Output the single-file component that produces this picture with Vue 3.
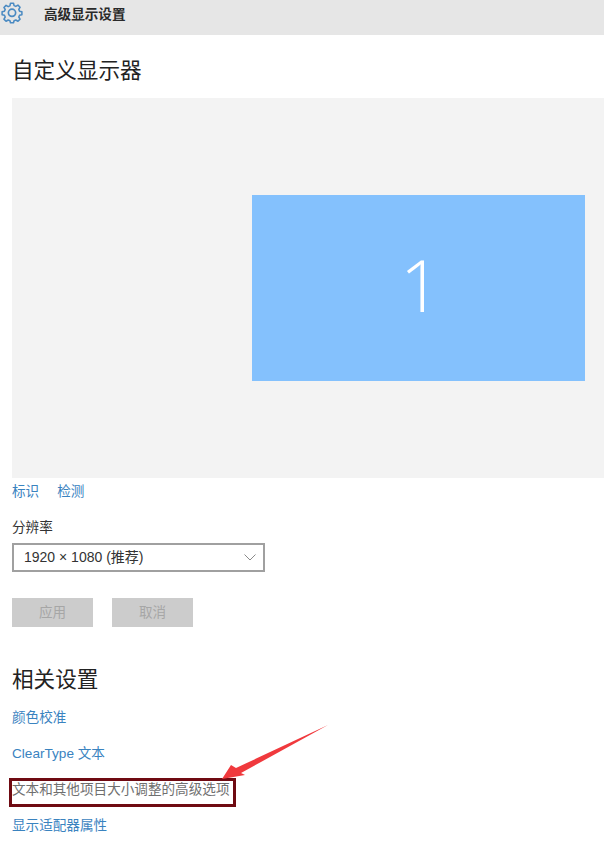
<script setup>
const links = ['颜色校准', 'ClearType 文本']
</script>

<template>
  <div class="page">
    <header class="bar">
      <svg class="gear" width="22" height="22" viewBox="0 0 26 26" fill="none" stroke="#4a8ac2" stroke-width="2" stroke-linejoin="round">
        <path d="M11 2.500h4l.7 3.200 2.300 1 2.800-1.700 2.800 2.800-1.700 2.800 1 2.300 3.100.7v4l-3.100.7-1 2.300 1.700 2.800-2.800 2.800-2.800-1.700-2.300 1-.7 2.700h-4l-.7-2.700-2.300-1-2.800 1.700-2.800-2.800 1.700-2.800-1-2.300-3.100-.7v-4l3.100-.7 1-2.300L2.400 8.100l2.800-2.800L8 7l2.300-1z" transform="translate(1.300 -.8) scale(.9)"/>
        <circle cx="13" cy="12.800" r="4.300"/>
      </svg>
      <span class="bar-title">高级显示设置</span>
    </header>

    <main class="content">
      <h1 class="heading first">自定义显示器</h1>
      <section class="canvas">
        <div class="monitor">1</div>
      </section>
      <nav class="actions">
        <a>标识</a>
        <a>检测</a>
      </nav>
      <label class="label">分辨率</label>
      <div class="select">
        <span class="select-value">1920 × 1080 (推荐)</span>
        <svg width="12" height="7" viewBox="0 0 12 7" fill="none" stroke="#8a8a8a" stroke-width="1">
          <path d="M.5.500 6 6l5.500-5.500"/>
        </svg>
      </div>
      <div class="buttons">
        <button>应用</button>
        <button>取消</button>
      </div>
      <h1 class="heading second">相关设置</h1>
      <ul class="links">
        <li v-for="l in links" :key="l">{{ l }}</li>
        <li class="marked">
          <span>文本和其他项目大小调整的高级选项</span>
          <svg class="arrow" width="112" height="62" viewBox="0 0 112 62">
            <path d="M109 2 17 45 12 42 3 56 26 52 22 50Z" fill="#f0393d"/>
          </svg>
        </li>
        <li>显示适配器属性</li>
      </ul>
    </main>
  </div>
</template>

<style>
html, body { margin: 0; background: #fff; }
</style>

<style scoped>
.page {
  width: 604px;
  height: 845px;
  overflow: hidden;
  font-family: "Liberation Sans", "Noto Sans CJK SC", sans-serif;
  color: #222;
}
.bar {
  height: 35px;
  background: #e6e6e6;
  display: flex;
  align-items: center;
}
.gear { margin: 0 0 9px 1px; flex: none; }
.bar-title { margin: 0 0 10px 21px; font-size: 13.600px; font-weight: 700; color: #2a2a2a; }
.content { padding: 0 0 0 12px; }
.heading { margin: 0; font-weight: 400; font-size: 21.600px; line-height: 32px; color: #222; }
.first { margin-top: 20px; }
.canvas {
  margin-top: 11px;
  width: 592px;
  height: 380px;
  background: #f3f3f3;
  display: flex;
  align-items: flex-start;
  justify-content: flex-end;
  padding-top: 97px;
  box-sizing: border-box;
}
.monitor {
  width: 333px;
  height: 186px;
  margin-right: 19px;
  background: #84c1fd;
  color: #fff;
  font-family: "Open Sans", sans-serif;
  font-weight: 300;
  font-size: 72px;
  display: flex;
  align-items: center;
  justify-content: center;
  box-sizing: border-box;
  padding: 0 0 9px 4px;
}
.actions { display: flex; gap: 18px; margin-top: 5px; height: 18px; font-size: 13.600px; line-height: 18px; color: #3a83bf; }
.label { display: block; margin-top: 18px; font-size: 13.600px; line-height: 18px; color: #333; }
.select {
  margin-top: 6px;
  width: 253px;
  height: 29px;
  border: 2px solid #a0a0a0;
  box-sizing: border-box;
  display: flex;
  align-items: center;
  justify-content: space-between;
  padding: 0 7px 0 10px;
  font-size: 14px;
  color: #333;
  background: #fff;
}
.select-value { margin-bottom: 3px; }
.buttons { display: flex; gap: 19px; margin-top: 26px; }
.buttons button {
  width: 81px;
  height: 29px;
  border: 0;
  padding: 0 0 3px;
  background: #cccccc;
  color: #a6a6a6;
  font: inherit;
  font-size: 13.600px;
}
.second { margin-top: 37px; }
.links { list-style: none; margin: 13px 0 0; padding: 0; font-size: 13.600px; color: #3a83bf; }
.links li { height: 36px; line-height: 18px; }
.marked { position: relative; color: #6f6f6f; }
.marked::before {
  content: "";
  position: absolute;
  left: -3px;
  top: -3px;
  width: 227px;
  height: 29px;
  border: 3px solid #6f0a12;
  box-sizing: border-box;
}
.arrow { position: absolute; left: 207px; top: -58px; }
</style>
